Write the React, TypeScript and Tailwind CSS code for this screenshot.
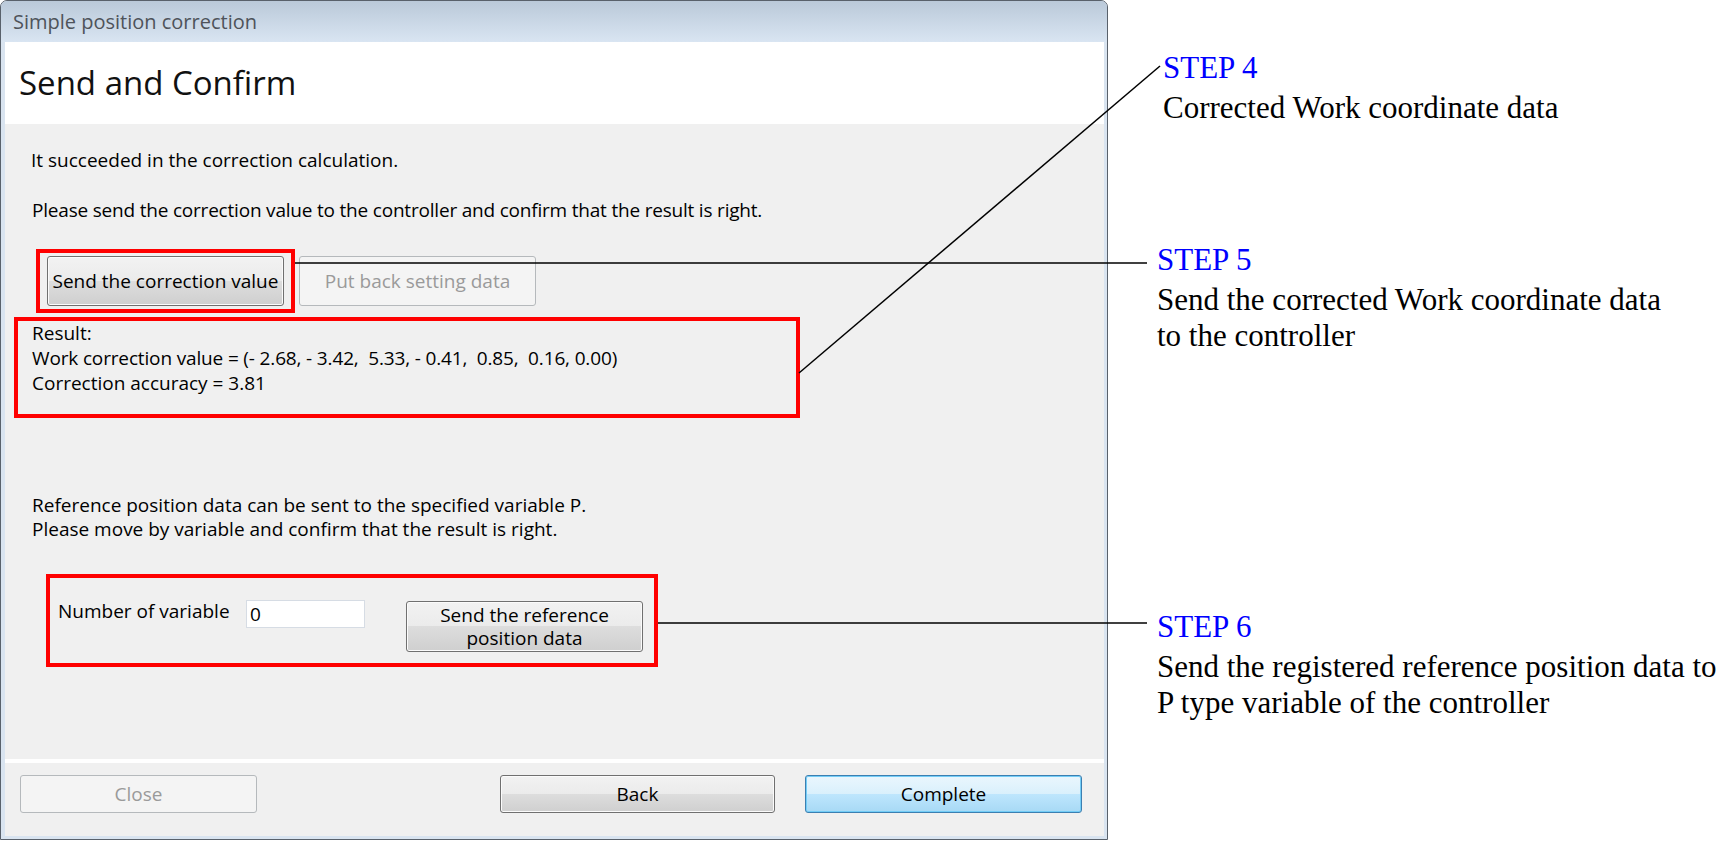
import React from "react";

const sans = "font-['Open_Sans','Noto_Sans',sans-serif]";
const serif = "font-['Liberation_Serif','Times_New_Roman',serif]";

type Variant = "normal" | "disabled" | "default";

const VARIANTS: Record<Variant, string> = {
  normal:
    "border-[#707070] text-black bg-[linear-gradient(to_bottom,#f2f2f2_0%,#ebebeb_50%,#dddddd_50%,#cfcfcf_100%)] shadow-[inset_0_0_0_1px_#fbfbfb]",
  disabled: "border-[#b5b9bc] text-[#9a9a9a] bg-[#f4f4f4]",
  default:
    "border-[#3c7fb1] text-black bg-[linear-gradient(to_bottom,#eaf6fd_0%,#d9f0fc_50%,#bee6fd_50%,#a7d9f5_100%)] shadow-[inset_0_0_0_1px_#73cdf7]",
};

function WinButton({
  children,
  className = "",
  variant = "normal",
}: {
  children: React.ReactNode;
  className?: string;
  variant?: Variant;
}) {
  return (
    <div
      className={`flex shrink-0 items-center justify-center rounded-[3px] border text-center ${VARIANTS[variant]} ${className}`}
    >
      {children}
    </div>
  );
}

function Step({ label, lines, className = "" }: { label: string; lines: string[]; className?: string }) {
  return (
    <div className={className}>
      <div className="text-[#0000ff]">{label}</div>
      <div className="mt-[4px] whitespace-nowrap text-black">
        {lines.map((l, i) => (
          <div key={i}>{l}</div>
        ))}
      </div>
    </div>
  );
}

export default function App() {
  return (
    <div className={`relative flex h-[841px] w-[1720px] overflow-hidden bg-white ${sans}`}>
      {/* dialog window */}
      <div className="flex h-[840px] w-[1108px] shrink-0 flex-col overflow-hidden rounded-t-[7px] border border-[#59616b] bg-[#d9e4f0]">
        <div className="h-[41px] shrink-0 bg-linear-to-b from-[#bac9d9] to-[#d9e5f2] pl-[12px] text-[20px] leading-[41px] text-[#4e535a]">
          Simple position correction
        </div>

        <div className="flex flex-1 flex-col pb-[3px] pl-[4px] pr-[3px]">
          <div className="h-[82px] shrink-0 bg-white pl-[14px] text-[33px] leading-[82px] text-[#111]">
            Send and Confirm
          </div>

          <div className="flex-1 bg-[#f0f0f0] pt-[24px] text-[19px] leading-[25px] text-black">
            <p className="pl-[26px]">It succeeded in the correction calculation.</p>
            <p className="mt-[25px] pl-[27px] tracking-[-0.2px]">
              Please send the correction value to the controller and confirm that the result is right.
            </p>

            <div className="mt-[26px] flex items-center pl-[31px]">
              <div className="border-4 border-[#ff0000] px-[7px] py-[3px]">
                <WinButton className="h-[50px] w-[237px]">Send the correction value</WinButton>
              </div>
              <WinButton variant="disabled" className="ml-[4px] h-[50px] w-[237px]">
                Put back setting data
              </WinButton>
            </div>

            <div className="ml-[9px] mt-[4px] h-[101px] w-[786px] border-4 border-[#ff0000] pl-[14px]">
              <p>Result:</p>
              <p className="whitespace-pre tracking-[-0.15px]">Work correction value = (- 2.68, - 3.42,  5.33, - 0.41,  0.85,  0.16, 0.00)</p>
              <p>Correction accuracy = 3.81</p>
            </div>

            <div className="mt-[75px] pl-[27px] leading-[24px]">
              <p>Reference position data can be sent to the specified variable P.</p>
              <p>Please move by variable and confirm that the result is right.</p>
            </div>

            <div className="ml-[41px] mt-[33px] flex h-[93px] w-[612px] items-start border-4 border-[#ff0000] pl-[8px] pt-[21px]">
              <span className="w-[188px] shrink-0">Number of variable</span>
              <div className="mt-[1px] h-[28px] w-[119px] border border-[#d6dce4] bg-white pl-[3px] leading-[26px]">
                0
              </div>
              <WinButton className="ml-[41px] mt-[2px] h-[51px] w-[237px] leading-[23px]">
                Send the reference
                <br />
                position data
              </WinButton>
            </div>
          </div>

          <div className="h-[4px] shrink-0 bg-white" />

          <div className="flex h-[73px] shrink-0 items-start bg-[#f0f0f0] pl-[15px] pr-[22px] pt-[12px] text-[19px]">
            <WinButton variant="disabled" className="h-[38px] w-[237px]">
              Close
            </WinButton>
            <WinButton className="ml-auto h-[38px] w-[275px]">Back</WinButton>
            <WinButton variant="default" className="ml-[30px] h-[38px] w-[277px]">
              Complete
            </WinButton>
          </div>
        </div>
      </div>

      {/* annotations */}
      <div className={`flex flex-col pl-[49px] pt-[50px] text-[31px] leading-[36px] ${serif}`}>
        <Step label="STEP 4" lines={["Corrected Work coordinate data"]} className="pl-[6px]" />
        <Step
          label="STEP 5"
          lines={["Send the corrected Work coordinate data", "to the controller"]}
          className="mt-[116px]"
        />
        <Step
          label="STEP 6"
          lines={["Send the registered reference position data to", "P type variable of the controller"]}
          className="mt-[255px]"
        />
      </div>

      {/* leader lines */}
      <svg className="pointer-events-none absolute left-0 top-0" width="1720" height="841">
        <line x1="799" y1="373" x2="1160" y2="66" stroke="#000" strokeWidth="1.5" />
        <line x1="295" y1="263" x2="1147" y2="263" stroke="#000" strokeWidth="1.5" />
        <line x1="658" y1="623" x2="1147" y2="623" stroke="#000" strokeWidth="1.5" />
      </svg>
    </div>
  );
}
